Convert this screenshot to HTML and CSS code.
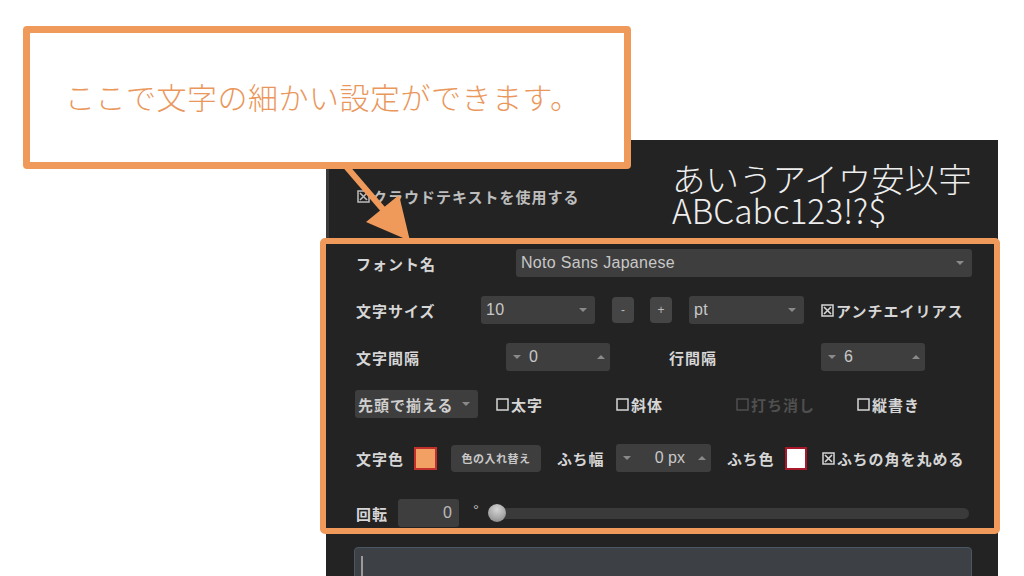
FILE: index.html
```html
<!DOCTYPE html>
<html lang="ja">
<head>
<meta charset="utf-8">
<link rel="stylesheet" href="styles.css">
</head>
<body>
<div class="stage">
  <div class="panel">
    <div class="top">
      <div class="cloud"><svg class="cb" viewBox="0 0 13 13"><rect x="1" y="1" width="11" height="11" fill="none" stroke="currentColor" stroke-width="1.5"/><path d="M3 3L10 10M10 3L3 10" stroke="currentColor" stroke-width="1.6"/></svg>クラウドテキストを使用する</div>
      <div class="preview"><p>あいうアイウ安以宇</p><p>ABCabc123!?$</p></div>
    </div>
    <div class="frame">
      <div class="row">
        <span class="lbl w160">フォント名</span>
        <div class="sel w456">Noto Sans Japanese<i class="dd"></i></div>
      </div>
      <div class="row">
        <span class="lbl w125">文字サイズ</span>
        <div class="sel w114">10<i class="dd"></i></div>
        <div class="mini m17">-</div>
        <div class="mini m16">+</div>
        <div class="sel w115 m17">pt<i class="dd"></i></div>
        <div class="chk m17"><svg class="cb" viewBox="0 0 13 13"><rect x="1" y="1" width="11" height="11" fill="none" stroke="currentColor" stroke-width="1.5"/><path d="M3 3L10 10M10 3L3 10" stroke="currentColor" stroke-width="1.6"/></svg>アンチエイリアス</div>
      </div>
      <div class="row">
        <span class="lbl w150">文字間隔</span>
        <div class="spin w104"><i class="down"></i><span class="val">0</span><i class="up"></i></div>
        <span class="lbl w152 m59">行間隔</span>
        <div class="spin w104"><i class="down"></i><span class="val">6</span><i class="up"></i></div>
      </div>
      <div class="row">
        <div class="sel jp w123 mneg">先頭で揃える<i class="dd"></i></div>
        <div class="chk w120 m18"><svg class="cb" viewBox="0 0 13 13"><rect x="1" y="1" width="11" height="11" fill="none" stroke="currentColor" stroke-width="1.5"/></svg>太字</div>
        <div class="chk w120"><svg class="cb" viewBox="0 0 13 13"><rect x="1" y="1" width="11" height="11" fill="none" stroke="currentColor" stroke-width="1.5"/></svg>斜体</div>
        <div class="chk off w121"><svg class="cb" viewBox="0 0 13 13"><rect x="1" y="1" width="11" height="11" fill="none" stroke="currentColor" stroke-width="1.5"/></svg>打ち消し</div>
        <div class="chk"><svg class="cb" viewBox="0 0 13 13"><rect x="1" y="1" width="11" height="11" fill="none" stroke="currentColor" stroke-width="1.5"/></svg>縦書き</div>
      </div>
      <div class="row r5">
        <span class="lbl w58">文字色</span>
        <div class="sw orange"></div>
        <div class="swap m14">色の入れ替え</div>
        <span class="lbl w59 m16">ふち幅</span>
        <div class="spin w95 px"><i class="down"></i><span class="val">0 px</span><i class="up"></i></div>
        <span class="lbl w58 m16">ふち色</span>
        <div class="sw white"></div>
        <div class="chk m15"><svg class="cb" viewBox="0 0 13 13"><rect x="1" y="1" width="11" height="11" fill="none" stroke="currentColor" stroke-width="1.5"/><path d="M3 3L10 10M10 3L3 10" stroke="currentColor" stroke-width="1.6"/></svg>ふちの角を丸める</div>
      </div>
      <div class="row r6">
        <span class="lbl w42">回転</span>
        <div class="num">0</div>
        <span class="deg">°</span>
        <div class="slider"><span class="knob"></span><span class="track"></span></div>
      </div>
    </div>
    <div class="ta"><span class="caret"></span></div>
  </div>
  <div class="callout">ここで文字の細かい設定ができます。</div>
  <svg class="arrow" viewBox="330 160 90 90">
    <line x1="344" y1="164" x2="387" y2="214" stroke="#EF9A5B" stroke-width="6"/>
    <polygon points="410,241 366,222 399,195" fill="#EF9A5B"/>
  </svg>
</div>
</body>
</html>
```
FILE: styles.css
```css
* { box-sizing: border-box; margin: 0; padding: 0; }
html, body { width: 1024px; height: 576px; overflow: hidden; background: #fff; }
body { font-family: "Noto Sans CJK JP", sans-serif; }

.stage { position: relative; width: 1024px; height: 576px; padding: 140px 0 0 326px; }

.panel { width: 672px; height: 436px; background: #232323; }

.top { display: flex; height: 98px; border-left: 3px solid #3a3a3a; padding-left: 28px; }
.cloud { width: 315px; margin-top: 46px; height: 20px; display: flex; align-items: center; font-size: 15px; letter-spacing: 1px; color: #bdbdbd; font-weight: 700; white-space: nowrap; }
.preview { margin-top: 22px; font-size: 33.5px; line-height: 32px; color: #eeeeee; font-weight: 300; white-space: nowrap; }

.frame { margin: 0 -2px 0 -6px; height: 296px; border: 6px solid #EF9A5B; border-radius: 5px; background: #232323; padding: 5px 0 0 30px; }

.row { display: flex; align-items: center; height: 28px; margin-top: 19px; }
.row:first-child { margin-top: 0; }
.row.r5 { margin-top: 26px; }
.row.r6 { margin-top: 27px; }

.lbl { font-size: 15px; font-weight: 700; color: #d6d6d6; letter-spacing: 1px; white-space: nowrap; flex: none; }

.w42 { width: 42px; } .w58 { width: 58px; } .w59 { width: 59px; }
.w95 { width: 95px; } .w104 { width: 104px; } .w114 { width: 114px; } .w115 { width: 115px; }
.w120 { width: 120px; } .w121 { width: 121px; } .w123 { width: 123px; } .w125 { width: 125px; }
.w150 { width: 150px; } .w152 { width: 152px; } .w160 { width: 160px; } .w456 { width: 456px; }
.m14 { margin-left: 14px; } .m15 { margin-left: 15px; } .m16 { margin-left: 16px; } .m17 { margin-left: 17px; }
.m18 { margin-left: 18px; } .m59 { margin-left: 59px; } .mneg { margin-left: -1px; }

.sel { height: 28px; background: #3e3e3e; border-radius: 3px; display: flex; align-items: center; padding: 0 8px 0 5px; font-family: "Liberation Sans", sans-serif; font-size: 16px; letter-spacing: 0.3px; color: #c8c8c8; flex: none; white-space: nowrap; }
.sel.jp { font-family: "Noto Sans CJK JP", sans-serif; font-size: 15px; font-weight: 700; letter-spacing: 1px; padding-left: 3px; color: #cfcfcf; }
.dd { margin-left: auto; width: 0; height: 0; border-left: 4px solid transparent; border-right: 4px solid transparent; border-top: 4px solid #8a8a8a; }

.mini { width: 22px; height: 26px; background: #454545; border-radius: 4px; display: flex; align-items: center; justify-content: center; font-family: "Liberation Sans", sans-serif; font-size: 12px; color: #bbb; flex: none; }

.chk { display: flex; align-items: center; font-size: 15px; font-weight: 700; color: #d6d6d6; letter-spacing: 1px; white-space: nowrap; flex: none; }
.chk.off { color: #4f4f4f; }
.cb { width: 13px; height: 13px; margin-right: 2px; flex: none; }

.spin { height: 28px; background: #3e3e3e; border-radius: 3px; display: flex; align-items: center; padding: 0 5px 0 7px; font-family: "Liberation Sans", sans-serif; font-size: 16px; color: #c8c8c8; flex: none; }
.spin .val { margin-left: 8px; }
.spin .up { margin-left: auto; }
.spin.px .val { margin-left: auto; margin-right: 13px; }
.spin.px .up { margin-left: 0; }
.down { width: 0; height: 0; border-left: 4px solid transparent; border-right: 4px solid transparent; border-top: 4px solid #8a8a8a; }
.up { width: 0; height: 0; border-left: 4px solid transparent; border-right: 4px solid transparent; border-bottom: 4px solid #8a8a8a; }

.sw { width: 23px; height: 23px; border: 2px solid #c3302c; flex: none; }
.sw.orange { background: #F2A064; }
.sw.white { width: 22px; background: #fff; border-color: #a8182a; }

.swap { width: 90px; height: 27px; background: #3e3e3e; border-radius: 4px; display: flex; align-items: center; justify-content: center; font-size: 11px; font-weight: 700; color: #c8c8c8; letter-spacing: 0.5px; flex: none; }

.num { width: 61px; height: 28px; background: #3e3e3e; border-radius: 3px; text-align: right; padding-right: 7px; line-height: 28px; font-family: "Liberation Sans", sans-serif; font-size: 16px; color: #bbb; flex: none; }
.deg { margin-left: 14px; font-family: "Liberation Sans", sans-serif; font-size: 15px; color: #bbb; align-self: flex-start; margin-top: 2px; }

.slider { margin-left: 9px; width: 481px; height: 18px; display: flex; align-items: center; flex: none; }
.knob { position: relative; z-index: 1; width: 18px; height: 18px; border-radius: 50%; background: radial-gradient(circle at 50% 30%, #d4d4d4 0%, #a8a8a8 55%, #7c7c7c 100%); flex: none; }
.track { margin-left: -9px; width: 472px; height: 11px; border-radius: 6px; background: #3a3a3a; flex: none; }

.ta { margin: 13px 0 0 28px; width: 618px; height: 40px; background: #3d4044; border: 1px solid #4a5866; border-radius: 4px; padding: 8px 0 0 6px; }
.caret { display: block; width: 2px; height: 20px; background: #9a9a9a; }

.callout { position: absolute; left: 23px; top: 26px; width: 608px; height: 143px; border: 7px solid #EF9A5B; border-radius: 4px; background: #fff; display: flex; align-items: center; padding-left: 35px; padding-bottom: 3px; font-size: 30px; font-weight: 300; color: #EA975C; letter-spacing: 0.5px; white-space: nowrap; z-index: 2; }

.arrow { position: absolute; left: 330px; top: 160px; width: 90px; height: 90px; z-index: 3; }
```
